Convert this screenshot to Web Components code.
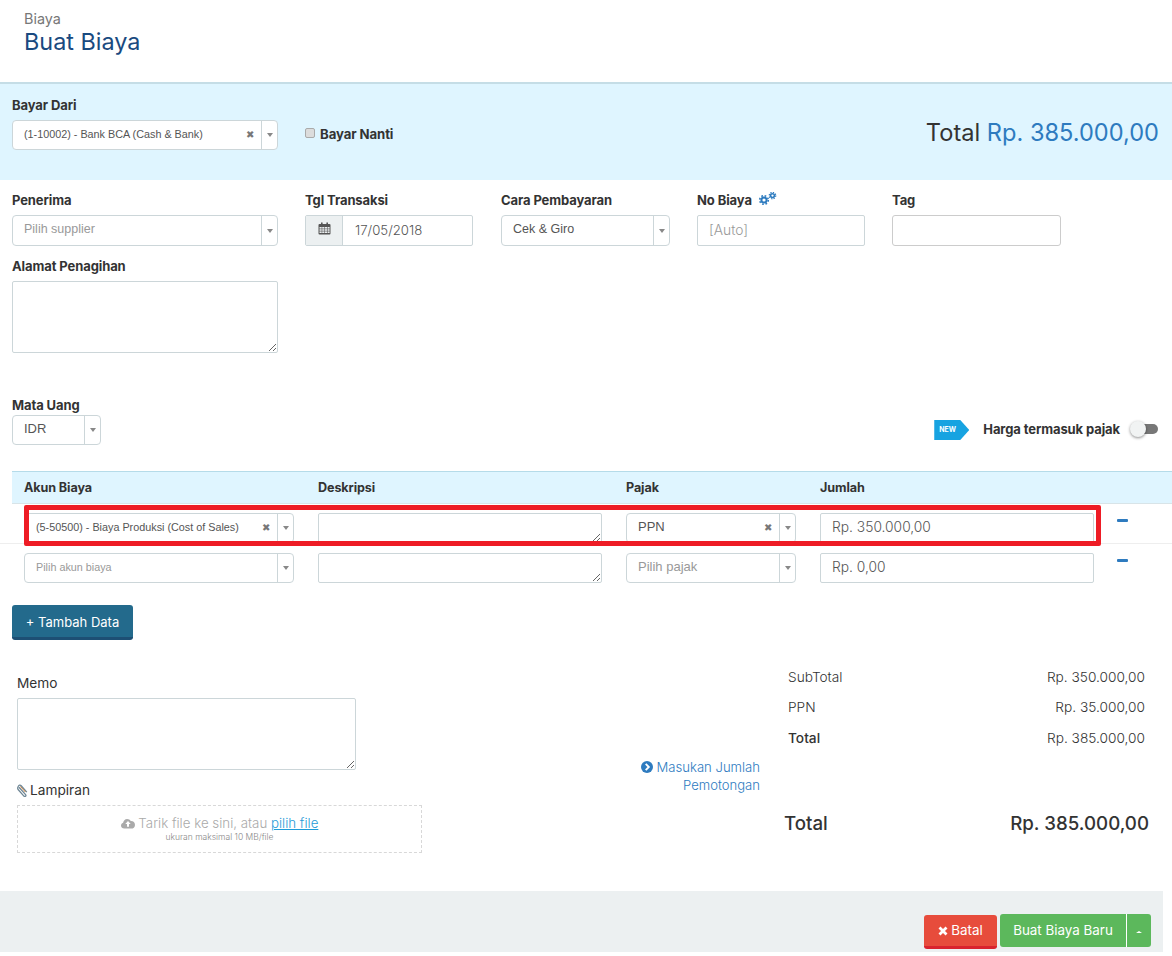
<!DOCTYPE html>
<html>
<head>
<meta charset="utf-8">
<title>Buat Biaya</title>
<style>
  html, body { margin: 0; padding: 0; background: #fff; overflow: hidden; height: 956px; }
  body { font-family: Inter, "Open Sans", sans-serif; color: #333; }
</style>
</head>
<body>
<page-head></page-head>
<pay-band></pay-band>
<main-form></main-form>
<cost-table></cost-table>
<bottom-panel></bottom-panel>
<action-bar></action-bar>

<script>
const ICON = {
  cal: `<svg width="13" height="13" viewBox="0 0 13 13"><rect x="0.5" y="2" width="12" height="10.5" fill="#555" rx="1"/><g fill="#e9edee"><rect x="1.5" y="5" width="2.2" height="1.6"/><rect x="4.2" y="5" width="2.2" height="1.6"/><rect x="6.9" y="5" width="2.2" height="1.6"/><rect x="9.6" y="5" width="2" height="1.6"/><rect x="1.5" y="7.2" width="2.2" height="1.6"/><rect x="4.2" y="7.2" width="2.2" height="1.6"/><rect x="6.9" y="7.2" width="2.2" height="1.6"/><rect x="9.6" y="7.2" width="2" height="1.6"/><rect x="1.5" y="9.4" width="2.2" height="1.6"/><rect x="4.2" y="9.4" width="2.2" height="1.6"/><rect x="6.9" y="9.4" width="2.2" height="1.6"/><rect x="9.6" y="9.4" width="2" height="1.6"/></g><rect x="3" y="0.5" width="1.6" height="3" fill="#555"/><rect x="8.4" y="0.5" width="1.6" height="3" fill="#555"/></svg>`,
  cogs: `<svg width="19" height="13" viewBox="0 0 19 13" fill="none" stroke="#2e7bbf"><circle cx="6" cy="8" r="2.6" stroke-width="2"/><circle cx="6" cy="8" r="4.3" stroke-width="1.6" stroke-dasharray="1.7 1.7"/><circle cx="14.5" cy="3.6" r="1.9" stroke-width="1.5"/><circle cx="14.5" cy="3.6" r="3.2" stroke-width="1.3" stroke-dasharray="1.3 1.2"/></svg>`,
  clip: `<svg width="11" height="13" viewBox="0 0 11 13" fill="none"><path d="M2 3.2 8.6 10.6c1 1.2-.7 2.6-1.700 1.500L1.300 5.700C-.3 3.900 2-.4 4.200 1.700l5.600 6.400" stroke="#6f8796" stroke-width="1.300"/><path d="M3.400 2.400 8.400 8" stroke="#c9803f" stroke-width="1"/></svg>`,
  cloud: `<svg width="14" height="11" viewBox="0 0 14 11"><path fill="#aaa" d="M3.300 10.600C1.400 10.600 0 9.300 0 7.600c0-1.400.9-2.500 2.100-2.900C2.300 2.700 4 1 6.100.9c1.600 0 3 .9 3.700 2.200 2.300-.2 4.200 1.600 4.200 3.800 0 2.100-1.700 3.700-3.800 3.700z"/><path fill="#fff" d="M7 3 4.300 6h1.700v2.700h2V6h1.700z"/></svg>`,
  chev: `<svg width="12" height="12" viewBox="0 0 12 12"><circle cx="6" cy="6" r="6" fill="#2e7bbf"/><path d="M4.700 2.900 7.800 6 4.700 9.100" fill="none" stroke="#fff" stroke-width="1.900"/></svg>`,
  x: `<svg width="10" height="10" viewBox="0 0 10 10"><path d="M1.500 1.500 8.500 8.500M8.500 1.500 1.500 8.500" stroke="#fff" stroke-width="2.800"/></svg>`
};

class XSelect extends HTMLElement {
  constructor() {
    super();
    this.attachShadow({ mode: 'open' });
    const clear = this.hasAttribute('clear') ? `<i class="clear">✖</i>` : '';
    this.shadowRoot.innerHTML = `
      <style>
        :host { display: flex; box-sizing: border-box; height: 31px; background: #fff; border: 1px solid #ccd6d9; border-radius: 4px; font-family: "Liberation Sans", Arial, sans-serif; font-size: var(--size, 13px); color: #555; }
        .val { flex: 1; padding: 5px 0 0 11px; line-height: 16px; white-space: nowrap; overflow: hidden; }
        :host([placeholder]) .val { color: #999; }
        .clear { font-style: normal; font-size: 10px; color: #777; width: 15px; line-height: 28px; }
        .arrow { width: 15px; border-left: 1px solid #ccd6d9; display: flex; align-items: center; justify-content: center; }
        .arrow b { width: 0; height: 0; border: 3px solid transparent; border-top: 4px solid #888; border-bottom: 0; }
      </style>
      <span class="val"><slot></slot></span>${clear}<span class="arrow"><b></b></span>
    `;
  }
}
customElements.define('x-select', XSelect);

class XField extends HTMLElement {
  constructor() {
    super();
    this.attachShadow({ mode: 'open' });
    this.shadowRoot.innerHTML = `
      <style>
        :host { display: block; }
        label { display: flex; align-items: flex-start; gap: 6px; font: 700 13px/16px Inter, sans-serif; color: #333; margin-bottom: 7px; letter-spacing: -.1px; }
      </style>
      <label>${this.getAttribute('label')}<slot name="extra"></slot></label>
      <slot></slot>
    `;
  }
}
customElements.define('x-field', XField);

class XInput extends HTMLElement {
  constructor() {
    super();
    this.attachShadow({ mode: 'open' });
    this.shadowRoot.innerHTML = `
      <style>
        :host { display: flex; box-sizing: border-box; height: 31px; border: 1px solid #ccd6d9; border-radius: 2px; background: #fff; font: 300 13.8px/29px Inter, sans-serif; color: #555; padding-left: 11px; }
        :host([muted]) { color: #999; }
      </style>
      <slot></slot>
    `;
  }
}
customElements.define('x-input', XInput);

class XArea extends HTMLElement {
  constructor() {
    super();
    this.attachShadow({ mode: 'open' });
    this.shadowRoot.innerHTML = `
      <style>
        :host { display: block; }
        textarea { display: block; box-sizing: border-box; width: 100%; height: var(--h, 72px); margin: 0; border: 1px solid #ccd6d9; border-radius: 2px; background: #fff; outline: 0; }
      </style>
      <textarea></textarea>
    `;
  }
}
customElements.define('x-area', XArea);

class PageHead extends HTMLElement {
  constructor() {
    super();
    this.attachShadow({ mode: 'open' });
    this.shadowRoot.innerHTML = `
      <style>
        :host { display: block; box-sizing: border-box; height: 84px; padding: 11px 24px 0; border-bottom: 2px solid #c5dde6; }
        small { display: block; font: 400 14.4px/16px Inter, sans-serif; color: #777; }
        h1 { margin: 2px 0 0; font: 400 23.4px/26px Inter, sans-serif; color: #1a4a80; }
      </style>
      <small>Biaya</small>
      <h1>Buat Biaya</h1>
    `;
  }
}
customElements.define('page-head', PageHead);

class PayBand extends HTMLElement {
  constructor() {
    super();
    this.attachShadow({ mode: 'open' });
    this.shadowRoot.innerHTML = `
      <style>
        :host { display: flex; box-sizing: border-box; height: 96px; background: #dff5ff; padding: 13px 13px 0 12px; align-items: flex-start; }
        x-field { width: 266px; }
        x-select { --size: 10.8px; height: 30px; }
        .later { display: flex; align-items: center; gap: 5px; margin: 28px 0 0 27px; font: 700 13.2px/18px Inter, sans-serif; letter-spacing: -.1px; }
        input { appearance: none; box-sizing: border-box; width: 10px; height: 10px; margin: 0 0 2px; background: #dcdcdc; border: 1px solid #aaa; border-radius: 2px; }
        .total { margin: 21px 0 0 auto; font: 400 23.6px/30px Inter, sans-serif; color: #333; }
        .total span { color: #2e7bbf; }
      </style>
      <x-field label="Bayar Dari"><x-select clear>(1-10002) - Bank BCA (Cash &amp; Bank)</x-select></x-field>
      <div class="later"><input type="checkbox"><span>Bayar Nanti</span></div>
      <div class="total">Total <span>Rp. 385.000,00</span></div>
    `;
  }
}
customElements.define('pay-band', PayBand);

class MainForm extends HTMLElement {
  constructor() {
    super();
    this.attachShadow({ mode: 'open' });
    this.shadowRoot.innerHTML = `
      <style>
        :host { display: block; box-sizing: border-box; height: 291px; padding: 12px 12px 0; }
        .row { display: grid; grid-template-columns: 293px repeat(4, 196px); }
        .row > x-field { width: 168px; }
        .row > x-field:first-child { width: 266px; }
        .date { display: flex; box-sizing: border-box; height: 31px; border: 1px solid #ccd6d9; border-radius: 2px; font: 300 13.2px/29px Inter, sans-serif; color: #555; }
        .date i { width: 37px; background: #ecf0f1; border-right: 1px solid #ccd6d9; display: flex; align-items: center; justify-content: center; padding-bottom: 3px; box-sizing: border-box; }
        .date span { padding-left: 12px; }
        .addr { width: 266px; margin-top: 12px; }
        .cur { width: 89px; margin-top: 44px; }
        .cur-row { display: flex; justify-content: space-between; align-items: flex-end; }
        .tax { display: flex; align-items: center; margin: 0 2px 5px 0; font: 700 13px/18px Inter, sans-serif; letter-spacing: -.1px; }
        .new { width: 35px; height: 20px; box-sizing: border-box; background: #17a3e1; color: #fff; font: 700 7px/20px Inter, sans-serif; padding-left: 5px; clip-path: polygon(0 0, 26px 0, 100% 50%, 26px 100%, 0 100%); margin: 2px 14px 0 0; }
        .sw { position: relative; width: 25px; height: 10px; margin-left: 13px; background: #777; border-radius: 5px; }
        .sw::before { content: ""; position: absolute; left: -3px; top: -3px; width: 16px; height: 16px; border-radius: 50%; background: #f1f3f3; box-shadow: 0 1px 3px rgba(0,0,0,.45); }
        svg { margin-top: -1px; }
        .cur x-select { height: 30px; }
      </style>
      <div class="row">
        <x-field label="Penerima"><x-select placeholder style="--size:12.5px">Pilih supplier</x-select></x-field>
        <x-field label="Tgl Transaksi"><div class="date"><i>${ICON.cal}</i><span>17/05/2018</span></div></x-field>
        <x-field label="Cara Pembayaran" style="width:169px"><x-select style="--size:12.5px">Cek &amp; Giro</x-select></x-field>
        <x-field label="No Biaya"><span slot="extra">${ICON.cogs}</span><x-input muted>[Auto]</x-input></x-field>
        <x-field label="Tag" style="margin-left:-1px;width:169px"><x-input style="border-color:#ccc;border-radius:3px"></x-input></x-field>
      </div>
      <x-field class="addr" label="Alamat Penagihan"><x-area></x-area></x-field>
      <div class="cur-row">
        <x-field class="cur" label="Mata Uang"><x-select style="margin-top:-5px;--size:13px">IDR</x-select></x-field>
        <div class="tax"><div class="new">NEW</div>Harga termasuk pajak<div class="sw"></div></div>
      </div>
    `;
  }
}
customElements.define('main-form', MainForm);

class CostRow extends HTMLElement {
  constructor() {
    super();
    this.attachShadow({ mode: 'open' });
    const a = this.getAttribute('akun');
    const p = this.getAttribute('pajak');
    this.shadowRoot.innerHTML = `
      <style>
        :host { display: grid; grid-template-columns: 270px 284px 170px 274px 12px; column-gap: 24px; padding: 9px 0 0 24px; height: 40px; box-sizing: border-box; border-bottom: 1px solid #eee; }
        :host(:last-child) { border-bottom: 0; height: 46px; }
        .minus { width: 11px; height: 3px; margin: 6px 0 0 -1px; background: #2e7bbf; border-radius: 1px; }
        x-area { --h: 30px; }
        x-select, x-input { height: 30px; }
        x-input { line-height: 27px; }
        .a { --size: 10.8px; }
      </style>
      <x-select class="a" ${a ? 'clear' : 'placeholder'}>${a || 'Pilih akun biaya'}</x-select>
      <x-area></x-area>
      <x-select style="--size:13px" ${p ? 'clear' : 'placeholder'}>${p || 'Pilih pajak'}</x-select>
      <x-input>${this.getAttribute('jumlah')}</x-input>
      <div class="minus"></div>
    `;
  }
}
customElements.define('cost-row', CostRow);

class CostTable extends HTMLElement {
  constructor() {
    super();
    this.attachShadow({ mode: 'open' });
    this.shadowRoot.innerHTML = `
      <style>
        :host { display: block; position: relative; margin-left: 12px; }
        .head { display: grid; grid-template-columns: 270px 284px 170px 274px; column-gap: 24px; box-sizing: border-box; height: 33px; padding-left: 12px; background: #dff5ff; border-top: 1px solid #b5dbe9; border-bottom: 1px solid #d8e4e8; font: 700 12.6px/31px Inter, sans-serif; letter-spacing: -.1px; }
        .rows { margin-left: -12px; }
        .mark { position: absolute; left: 12px; top: 34px; width: 1077px; height: 41px; box-sizing: border-box; border: 5px solid #ee1c25; border-radius: 2px; pointer-events: none; }
        button { display: block; margin-top: 15px; width: 121px; height: 35px; border: 0; border-bottom: 3px solid #1d4f74; border-radius: 3px; background: #236a8c; color: #fff; font: 400 13px/20px Inter, sans-serif; padding: 2px 0 0; }
      </style>
      <div class="head"><span>Akun Biaya</span><span>Deskripsi</span><span>Pajak</span><span>Jumlah</span></div>
      <div class="rows">
        <cost-row akun="(5-50500) - Biaya Produksi (Cost of Sales)" pajak="PPN" jumlah="Rp. 350.000,00"></cost-row>
        <cost-row jumlah="Rp. 0,00"></cost-row>
      </div>
      <div class="mark"></div>
      <button>+ Tambah Data</button>
    `;
  }
}
customElements.define('cost-table', CostTable);

class BottomPanel extends HTMLElement {
  constructor() {
    super();
    this.attachShadow({ mode: 'open' });
    this.shadowRoot.innerHTML = `
      <style>
        :host { display: grid; grid-template-columns: 405px 338px 389px; box-sizing: border-box; height: 251px; padding: 34px 0 0 17px; font: 300 13.7px/18px Inter, sans-serif; color: #333; }
        .lbl { font-weight: 400; line-height: 18px; margin-bottom: 6px; }
        x-area { width: 339px; }
        .lamp { display: flex; align-items: center; gap: 2px; margin: 11px 0 6px; font-weight: 400; }
        .drop { box-sizing: border-box; height: 48px; border: 1px dashed #d8d8d8; text-align: center; padding-top: 8px; color: #aaa; font-size: 13.3px; }
        .drop svg { vertical-align: -1px; }
        .drop a { color: #1f9bd8; text-decoration: underline; }
        .drop small { display: block; font-size: 8.5px; line-height: 11px; color: #888; }
        .link { text-align: right; color: #2e7bbf; margin-top: 84px; line-height: 18px; padding-left: 190px; font-size: 13.1px; }
        .link svg { vertical-align: -1px; }
        .sum { padding: 0 0 0 28px; margin-top: -6px; }
        .r { display: flex; justify-content: space-between; height: 31px; padding-right: 4px; }
        .r:first-child { height: 30px; }
        .r b { font-weight: 500; }
        .big { display: flex; justify-content: space-between; margin: 51.5px 0 0 -4px; font: 500 18.7px/24px Inter, sans-serif; }
      </style>
      <div>
        <div class="lbl">Memo</div>
        <x-area></x-area>
        <div class="lamp">${ICON.clip}<span>Lampiran</span></div>
        <div class="drop">${ICON.cloud} Tarik file ke sini, atau <a>pilih file</a><small>ukuran maksimal 10 MB/file</small></div>
      </div>
      <div class="link">${ICON.chev} Masukan Jumlah Pemotongan</div>
      <div class="sum">
        <div class="r"><span>SubTotal</span><span>Rp. 350.000,00</span></div>
        <div class="r"><span>PPN</span><span>Rp. 35.000,00</span></div>
        <div class="r"><b>Total</b><span>Rp. 385.000,00</span></div>
        <div class="big"><span>Total</span><span>Rp. 385.000,00</span></div>
      </div>
    `;
  }
}
customElements.define('bottom-panel', BottomPanel);

class ActionBar extends HTMLElement {
  constructor() {
    super();
    this.attachShadow({ mode: 'open' });
    this.shadowRoot.innerHTML = `
      <style>
        :host { display: flex; justify-content: flex-end; align-items: flex-start; box-sizing: border-box; width: 1163px; height: 61px; background: #ecf0f1; padding: 23px 12px 0 0; gap: 3px; font: 400 13.4px/33px Inter, sans-serif; color: #fff; }
        .no { display: flex; align-items: center; justify-content: center; gap: 3px; width: 73px; height: 34px; margin-top: 1px; box-sizing: border-box; background: #e74c3c; border-bottom: 3px solid #d9232e; border-radius: 3px; }
        .go { display: flex; width: 151px; height: 33px; background: #5cb85c; border-radius: 3px; }
        .go span { width: 127px; text-align: center; border-right: 1px solid #fff; box-sizing: border-box; }
        .go i { flex: 1; display: flex; align-items: center; justify-content: center; }
        .go i b { width: 0; height: 0; border: 3px solid transparent; border-top: 0; border-bottom: 2px solid #fff; margin-top: 3px; }
      </style>
      <div class="no">${ICON.x}<span>Batal</span></div>
      <div class="go"><span>Buat Biaya Baru</span><i><b></b></i></div>
    `;
  }
}
customElements.define('action-bar', ActionBar);
</script>
</body>
</html>
